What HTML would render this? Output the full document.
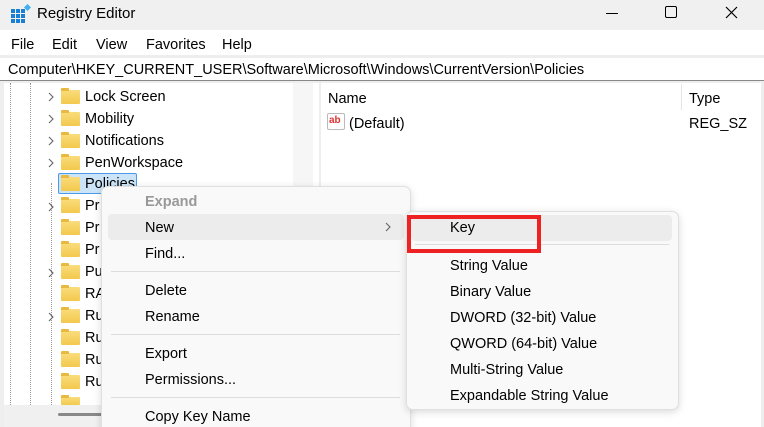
<!DOCTYPE html>
<html style="width:764px;height:427px;overflow:hidden"><head><style>
*{margin:0;padding:0;box-sizing:border-box}
body{width:764px;height:427px;overflow:hidden;background:#eeeeee;font-family:"Liberation Sans",sans-serif;font-size:14.5px;color:#000;position:relative}
.a{position:absolute;white-space:nowrap}
.fold{position:absolute;width:19px;height:14px;background:linear-gradient(#f9dc7b,#f3c94d);border-radius:1px}
.fold:before{content:"";position:absolute;left:0;top:-2px;width:8px;height:3px;background:#e8b93e;border-radius:1px 1px 0 0}
.chev{position:absolute;width:6px;height:10px}
.mi{position:absolute;left:145px;font-size:14.5px}
.si{position:absolute;left:450px;font-size:14.5px}
</style></head><body>
<div class="a" style="left:0;top:0;width:764px;height:30px;background:#f0f0f0"></div>
<svg class="a" style="left:11px;top:4px" width="20" height="20" viewBox="0 0 20 20">
<g fill="#1b7ed6"><rect x="0" y="5" width="4" height="4"/><rect x="5" y="5" width="4" height="4"/><rect x="10" y="5" width="4" height="4"/><rect x="0" y="10" width="4" height="4"/><rect x="5" y="10" width="4" height="4"/><rect x="10" y="10" width="4" height="4"/><rect x="0" y="15" width="4" height="4"/><rect x="5" y="15" width="4" height="4"/><rect x="10" y="15" width="4" height="4"/></g>
<rect x="14" y="1" width="5" height="5" fill="#3fb0f0" transform="rotate(45 16.5 3.5)"/></svg>
<div class="a" style="left:37px;top:5px;font-size:15px">Registry Editor</div>
<div class="a" style="left:606px;top:13px;width:12px;height:1px;background:#000"></div>
<div class="a" style="left:665px;top:6px;width:12px;height:12px;border:1px solid #000;border-radius:2px"></div>
<svg class="a" style="left:725px;top:6px" width="13" height="13"><path d="M1 1L12 12M12 1L1 12" stroke="#000" stroke-width="1.2"/></svg>
<div class="a" style="left:0;top:30px;width:764px;height:25px;background:#fff"></div>
<div class="a" style="left:11px;top:37px">File</div>
<div class="a" style="left:52px;top:37px">Edit</div>
<div class="a" style="left:96px;top:37px">View</div>
<div class="a" style="left:146px;top:37px">Favorites</div>
<div class="a" style="left:222px;top:37px">Help</div>
<div class="a" style="left:0;top:58px;width:764px;height:23px;background:#fff;border-bottom:1px solid #888"></div>
<div class="a" style="left:8px;top:62px">Computer\HKEY_CURRENT_USER\Software\Microsoft\Windows\CurrentVersion\Policies</div>
<div class="a" style="left:4px;top:83px;width:315px;height:344px;background:#fff"></div>
<div class="a" style="left:293px;top:83px;width:20px;height:322px;background:#f6f6f6"></div>
<div class="a" style="left:4px;top:405px;width:310px;height:22px;background:#f0f0f0"></div>
<div class="a" style="left:58px;top:413px;width:200px;height:3px;background:#888;border-radius:2px"></div>
<div class="a" style="left:10px;top:83px;width:0;height:322px;border-left:1px dotted #999"></div>
<div class="a" style="left:30px;top:83px;width:0;height:322px;border-left:1px dotted #999"></div>
<div class="a" style="left:51px;top:183px;width:0;height:222px;border-left:1px dotted #999"></div>
<div class="a" style="left:321px;top:83px;width:440px;height:344px;background:#fff"></div>
<div class="a" style="left:681px;top:84px;width:1px;height:26px;background:#e5e5e5"></div>
<div class="a" style="left:328px;top:91px">Name</div>
<div class="a" style="left:689px;top:91px">Type</div>
<div class="a" style="left:327px;top:113px;width:18px;height:17px;background:#fff;border:1px solid #bbb;border-radius:2px;font-size:10px;font-weight:bold;color:#d33;line-height:13px;padding-left:1px">ab</div>
<div class="a" style="left:349px;top:116px">(Default)</div>
<div class="a" style="left:689px;top:116px">REG_SZ</div>
<svg width="0" height="0" style="position:absolute"><defs><symbol id="cv" viewBox="0 0 6 10"><path d="M1 1L5 5L1 9" fill="none" stroke="#666" stroke-width="1.1"/></symbol></defs></svg>
<svg class="chev" style="left:48px;top:92px"><use href="#cv"/></svg><div class="fold" style="left:61px;top:90px"></div><div class="a" style="left:85px;top:89px">Lock Screen</div>
<svg class="chev" style="left:48px;top:114px"><use href="#cv"/></svg><div class="fold" style="left:61px;top:112px"></div><div class="a" style="left:85px;top:111px">Mobility</div>
<svg class="chev" style="left:48px;top:136px"><use href="#cv"/></svg><div class="fold" style="left:61px;top:134px"></div><div class="a" style="left:85px;top:133px">Notifications</div>
<svg class="chev" style="left:48px;top:158px"><use href="#cv"/></svg><div class="fold" style="left:61px;top:156px"></div><div class="a" style="left:85px;top:155px">PenWorkspace</div>
<div class="a" style="left:58px;top:173px;width:79px;height:21px;background:#cce4f7;border:1px solid #4c9be8;border-radius:2px"></div>
<div class="fold" style="left:61px;top:177px"></div><div class="a" style="left:85px;top:176px">Policies</div>
<svg class="chev" style="left:48px;top:202px"><use href="#cv"/></svg><div class="fold" style="left:61px;top:199px"></div><div class="a" style="left:85px;top:198px">Pr</div>
<div class="fold" style="left:61px;top:221px"></div><div class="a" style="left:85px;top:220px">Pr</div>
<div class="fold" style="left:61px;top:243px"></div><div class="a" style="left:85px;top:242px">Pr</div>
<svg class="chev" style="left:48px;top:268px"><use href="#cv"/></svg><div class="fold" style="left:61px;top:265px"></div><div class="a" style="left:85px;top:264px">Pu</div>
<div class="fold" style="left:61px;top:287px"></div><div class="a" style="left:85px;top:286px">RA</div>
<svg class="chev" style="left:48px;top:312px"><use href="#cv"/></svg><div class="fold" style="left:61px;top:309px"></div><div class="a" style="left:85px;top:308px">Ru</div>
<div class="fold" style="left:61px;top:331px"></div><div class="a" style="left:85px;top:330px">Ru</div>
<div class="fold" style="left:61px;top:353px"></div><div class="a" style="left:85px;top:352px">Ru</div>
<div class="fold" style="left:61px;top:375px"></div><div class="a" style="left:85px;top:374px">Ru</div>
<div class="fold" style="left:61px;top:397px;height:8px"></div>
<div class="a" style="left:101px;top:186px;width:310px;height:250px;background:#f9f9f9;border:1px solid #e0e0e0;border-radius:7px;box-shadow:0 2px 8px rgba(0,0,0,.15)"></div>
<div class="a" style="left:108px;top:214px;width:296px;height:26px;background:#ececec;border-radius:4px"></div>
<div class="mi" style="top:194px;color:#999;font-weight:bold">Expand</div>
<div class="mi" style="top:220px">New</div>
<svg class="chev" style="left:385px;top:222px"><use href="#cv"/></svg>
<div class="mi" style="top:246px">Find...</div>
<div class="a" style="left:111px;top:271px;width:289px;height:1px;background:#ddd"></div>
<div class="mi" style="top:283px">Delete</div>
<div class="mi" style="top:309px">Rename</div>
<div class="a" style="left:111px;top:334px;width:289px;height:1px;background:#ddd"></div>
<div class="mi" style="top:346px">Export</div>
<div class="mi" style="top:372px">Permissions...</div>
<div class="a" style="left:111px;top:397px;width:289px;height:1px;background:#ddd"></div>
<div class="mi" style="top:409px">Copy Key Name</div>
<div class="a" style="left:406px;top:211px;width:273px;height:199px;background:#f9f9f9;border:1px solid #e0e0e0;border-radius:7px;box-shadow:0 2px 8px rgba(0,0,0,.15)"></div>
<div class="a" style="left:411px;top:215px;width:261px;height:26px;background:#ececec;border-radius:4px"></div>
<div class="a" style="left:415px;top:244px;width:254px;height:1px;background:#ddd"></div>
<div class="si" style="top:220px">Key</div>
<div class="a" style="left:407px;top:215px;width:134px;height:38px;border:4px solid #ee2222"></div>
<div class="si" style="top:258px">String Value</div>
<div class="si" style="top:284px">Binary Value</div>
<div class="si" style="top:310px">DWORD (32-bit) Value</div>
<div class="si" style="top:336px">QWORD (64-bit) Value</div>
<div class="si" style="top:362px">Multi-String Value</div>
<div class="si" style="top:388px">Expandable String Value</div>
</body></html>
